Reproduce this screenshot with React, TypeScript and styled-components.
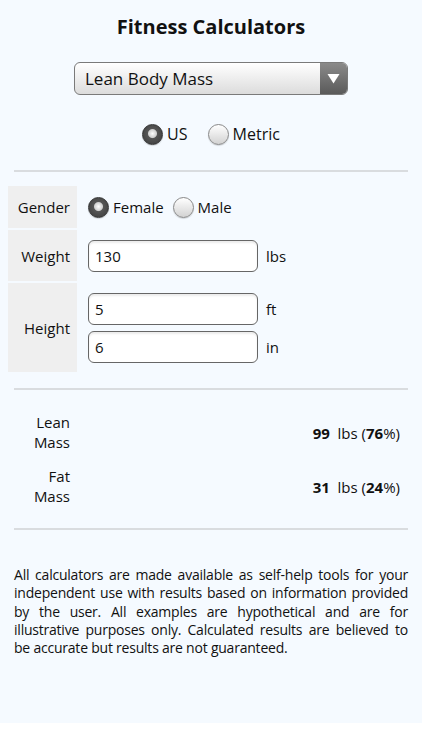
import styled, {createGlobalStyle} from 'styled-components'

const GlobalStyle = createGlobalStyle`
    body {
        margin: 0;
        background: #ffffff;
        font-family: "Open Sans", "DejaVu Sans", sans-serif;
        color: #111;
    }
`
const Page = styled.div`
    box-sizing: border-box;
    height: 723px;
    padding: 14px 14px 0;
    background-color: #f5faff;
`
const Title = styled.h1`
    margin: 0;
    text-align: center;
    font-size: 20px;
    line-height: 26px;
    font-weight: bold;
`
const SelectBox = styled.div`
    box-sizing: border-box;
    display: flex;
    align-items: stretch;
    width: 274px;
    height: 33px;
    margin: 22px auto 0;
    border: 1px solid #7a7a7a;
    border-radius: 6px;
    overflow: hidden;
    background: linear-gradient(#ffffff, #dcdcdc);
`
const SelectText = styled.div`
    flex: 1;
    display: flex;
    align-items: center;
    padding-left: 10px;
    font-size: 17px;
`
const SelectArrow = styled.div`
    width: 27px;
    display: flex;
    align-items: center;
    justify-content: center;
    background: linear-gradient(#8a8a8a, #5a5a5a);
`
const RadioRow = styled.div`
    display: flex;
    justify-content: center;
    align-items: center;
    gap: 20px;
    margin-top: 28px;
    height: 22px;
`
const RadioLabel = styled.label<{size: number}>`
    display: flex;
    align-items: center;
    gap: 4px;
    font-size: ${p => p.size}px;
`
const RadioDot = styled.span<{checked?: boolean}>`
    box-sizing: border-box;
    width: 21px;
    height: 21px;
    border-radius: 50%;
    border: 1px solid ${p => p.checked ? '#333' : '#888'};
    background: ${p => p.checked
        ? 'radial-gradient(circle at 50% 45%, #ffffff 0, #d0d0d0 4px, #555 5px, #3a3a3a 100%)'
        : 'linear-gradient(#ffffff, #d2d2d2)'};
    box-shadow: 0 1px 1px rgba(0,0,0,.15);
`
const Divider = styled.hr<{top: number}>`
    border: none;
    height: 2px;
    margin: ${p => p.top}px 0 0;
    background-color: #d9dcdf;
`
const FormGrid = styled.div`
    display: grid;
    grid-template-columns: 69px 1fr;
    row-gap: 2px;
    margin: 14px -6px 0;
`
const LabelCell = styled.div`
    display: flex;
    align-items: center;
    justify-content: flex-end;
    padding-right: 7px;
    background-color: #efefef;
    font-size: 15px;
`
const ValueCell = styled.div<{pad?: string}>`
    display: flex;
    flex-direction: column;
    justify-content: center;
    gap: 6px;
    padding: ${p => p.pad ?? '10px 0 9px 11px'};
`
const InputRow = styled.div`
    display: flex;
    align-items: center;
    gap: 8px;
`
const Input = styled.div`
    box-sizing: border-box;
    width: 170px;
    height: 32px;
    display: flex;
    align-items: center;
    padding-left: 6px;
    border: 1.5px solid #666;
    border-radius: 6px;
    background: #fff;
    box-shadow: inset 0 2px 2px rgba(0,0,0,.08);
    font-size: 15px;
`
const Unit = styled.span`
    font-size: 15px;
`
const GenderRow = styled.div`
    display: flex;
    align-items: center;
    gap: 9px;
    height: 42px;
`
const Results = styled.div`
    display: flex;
    flex-direction: column;
    gap: 15px;
    margin: 23px 0 0;
`
const ResultRow = styled.div`
    display: flex;
    align-items: center;
    justify-content: space-between;
    padding-right: 8px;
`
const ResultLabel = styled.div`
    width: 56px;
    text-align: right;
    font-size: 15px;
    line-height: 19.5px;
`
const ResultValue = styled.div`
    font-size: 15px;
    b { font-weight: bold; }
`
const Disclaimer = styled.p`
    margin: 36px 0 0;
    text-align: justify;
    font-size: 14px;
    letter-spacing: -0.22px;
    line-height: 18.3px;
`

function Radio({checked, size = 15, children}: {checked?: boolean, size?: number, children: string}) {
    return (
        <RadioLabel size={size}>
            <RadioDot checked={checked}/>
            {children}
        </RadioLabel>
    )
}

export default function App() {
    return (
        <Page>
            <GlobalStyle/>
            <Title>Fitness Calculators</Title>
            <SelectBox>
                <SelectText>Lean Body Mass</SelectText>
                <SelectArrow>
                    <svg width="13" height="11" viewBox="0 0 13 11">
                        <path d="M0.5 1 H12.5 L6.5 10.5 Z" fill="#fff"/>
                    </svg>
                </SelectArrow>
            </SelectBox>
            <RadioRow>
                <Radio checked size={16}>US</Radio>
                <Radio size={16}>Metric</Radio>
            </RadioRow>
            <Divider top={25}/>
            <FormGrid>
                <LabelCell>Gender</LabelCell>
                <ValueCell pad="0 0 0 11px">
                    <GenderRow>
                        <Radio checked>Female</Radio>
                        <Radio>Male</Radio>
                    </GenderRow>
                </ValueCell>
                <LabelCell>Weight</LabelCell>
                <ValueCell>
                    <InputRow><Input>130</Input><Unit>lbs</Unit></InputRow>
                </ValueCell>
                <LabelCell>Height</LabelCell>
                <ValueCell>
                    <InputRow><Input>5</Input><Unit>ft</Unit></InputRow>
                    <InputRow><Input>6</Input><Unit>in</Unit></InputRow>
                </ValueCell>
            </FormGrid>
            <Divider top={16}/>
            <Results>
                <ResultRow>
                    <ResultLabel>Lean Mass</ResultLabel>
                    <ResultValue><b>99</b>&nbsp; lbs (<b>76</b>%)</ResultValue>
                </ResultRow>
                <ResultRow>
                    <ResultLabel>Fat Mass</ResultLabel>
                    <ResultValue><b>31</b>&nbsp; lbs (<b>24</b>%)</ResultValue>
                </ResultRow>
            </Results>
            <Divider top={22}/>
            <Disclaimer>
                All calculators are made available as self-help tools for your independent use with results based on information provided by the user. All examples are hypothetical and are for illustrative purposes only. Calculated results are believed to be&nbsp;accurate but results are not guaranteed.
            </Disclaimer>
        </Page>
    )
}
